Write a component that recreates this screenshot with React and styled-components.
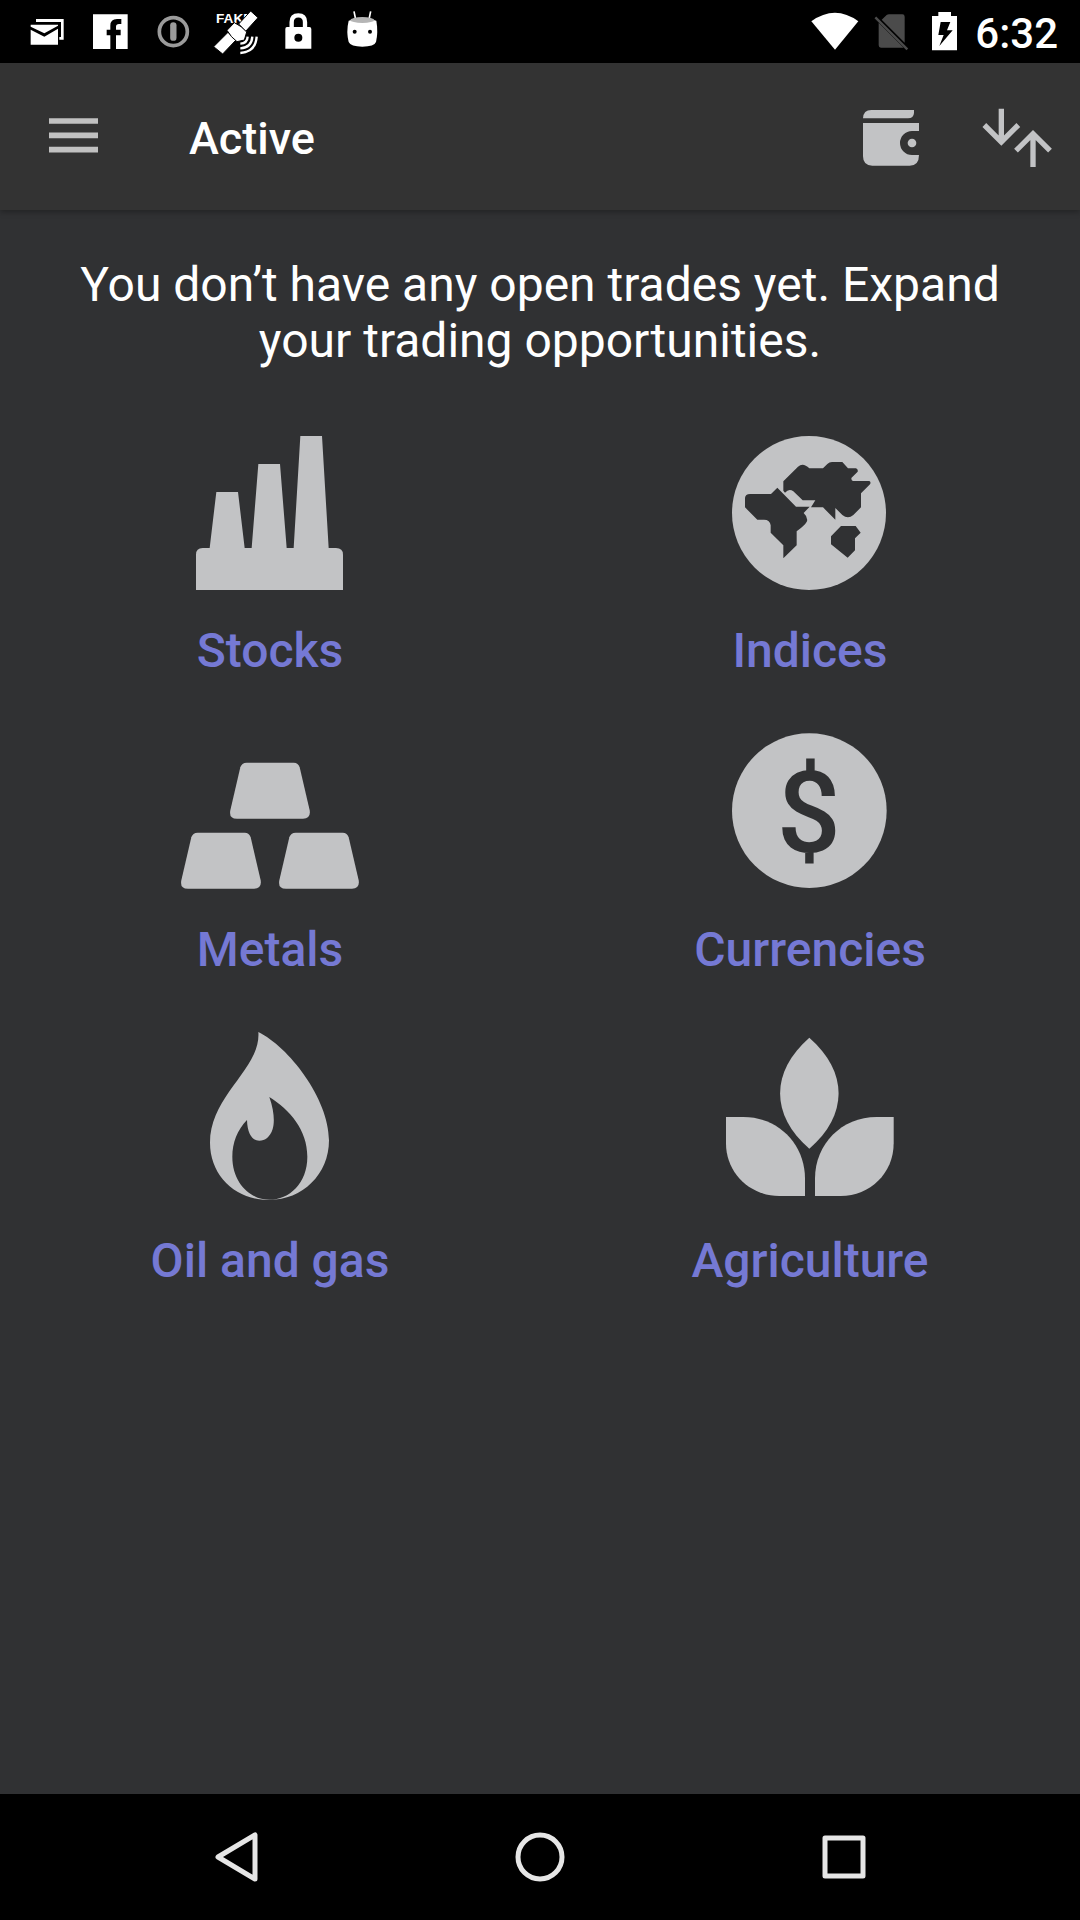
import React from "react";
import styled, { createGlobalStyle } from "styled-components";

const GlobalStyle = createGlobalStyle`
  *, *::before, *::after { box-sizing: border-box; }
  body {
    margin: 0;
    background: #303133;
    color: #ffffff;
    font-family: Roboto, "Liberation Sans", sans-serif;
  }
`;

const Screen = styled.div`
  display: flex;
  flex-direction: column;
  min-height: 100vh;
`;

const StatusBar = styled.div`
  display: flex;
  justify-content: space-between;
  align-items: center;
  height: 63px;
  padding: 0 22px 0 16px;
  background: #000000;
`;

const StatusGroup = styled.div`
  display: flex;
  align-items: center;
`;

const StatusIcon = styled.svg`
  display: block;
  width: ${(p) => p.$width}px;
  height: 63px;
`;

const Clock = styled.time`
  padding-top: 4px;
  font-size: 42px;
  line-height: 48px;
  font-weight: 500;
`;

const AppBar = styled.header`
  display: flex;
  align-items: center;
  height: 147px;
  background: #333333;
  box-shadow: 0 2px 6px rgba(0, 0, 0, 0.3);
`;

const BarButton = styled.button`
  width: ${(p) => p.$width}px;
  height: 147px;
  padding: 0;
  border: 0;
  background: none;
  cursor: pointer;

  svg {
    display: block;
    width: 100%;
    height: 100%;
  }
`;

const Title = styled.h1`
  flex: 1;
  margin: 0;
  padding: 4px 0 0 42px;
  font-size: 45px;
  line-height: 56px;
  font-weight: 500;
`;

const Main = styled.main`
  flex: 1;
  padding: 47px 0 0;
`;

const Message = styled.p`
  margin: 0;
  padding: 0 64px;
  font-size: 48px;
  line-height: 56px;
  text-align: center;
`;

const Categories = styled.div`
  display: grid;
  grid-template-columns: 1fr 1fr;
  row-gap: 54px;
  margin-top: 67px;
`;

const Category = styled.button`
  display: flex;
  flex-direction: column;
  align-items: center;
  justify-content: flex-end;
  gap: 33px;
  padding: 0;
  border: 0;
  background: none;
  color: #7579d4;
  font-family: inherit;
  font-size: 48px;
  line-height: 56px;
  font-weight: 500;
  cursor: pointer;
`;

const CategoryIcon = styled.svg`
  display: block;
  width: ${(p) => p.$width}px;
  height: ${(p) => p.$height}px;
  fill: #c2c3c5;
`;

const NavBar = styled.nav`
  display: flex;
  justify-content: center;
  height: 126px;
  background: #000000;
`;

const NavButton = styled.button`
  display: flex;
  align-items: center;
  justify-content: center;
  width: 304px;
  padding: 0;
  border: 0;
  background: none;
  cursor: pointer;

  svg {
    width: 56px;
    height: 56px;
    fill: none;
    stroke: #e6e6e6;
    stroke-width: 5;
    stroke-linejoin: round;
  }
`;

const StocksIcon = () => (
  <CategoryIcon $width={148} $height={154} viewBox="108 48 444 462" aria-hidden="true">
    <path d="M108 510V404Q108 384 128 384H149L169 216H234L254 384H275L295 132H360L380 384H401L421 48H486L506 384H528Q549 384 549 404V510Z" />
  </CategoryIcon>
);

const IndicesIcon = () => (
  <CategoryIcon $width={156} $height={154} viewBox="66 48 468 462" aria-hidden="true">
    <circle cx="297" cy="279" r="231" />
    <g fill="#303133">
      <path d="M105 234Q106 222 120 222H183L202 203L258 260H299L281 279Q294 291 291 304Q288 314 260 334V376L220 415V376L182 338V316Q180 299 162 299H142L105 262Z" />
      <path d="M220 184L264 140Q279 126 298 145H339L352 132Q358 126 366 126H397L414 145H438Q445 148 443 155L424 174Q424 183 430 183H478Q484 187 480 193L453 220V262L430 285Q414 299 397 285L376 264V299L339 262H303L316 241H278L250 214Q237 204 225 218L220 212Z" />
      <path d="M393 318H437L452 338L435 355V391L413 413L363 373V349Z" />
    </g>
  </CategoryIcon>
);

const MetalsIcon = () => (
  <CategoryIcon $width={178} $height={156} viewBox="123 69 534 468" aria-hidden="true">
    <path d="M320 158H461Q475 158 479 172L509 301Q513 326 489 326H291Q266 326 271 301L301 172Q305 158 320 158Z" />
    <path d="M173 368H314Q328 368 332 382L362 511Q366 536 342 536H144Q119 536 124 511L154 382Q158 368 173 368Z" />
    <path d="M467 368H608Q622 368 626 382L656 511Q660 536 636 536H438Q413 536 418 511L448 382Q452 368 467 368Z" />
  </CategoryIcon>
);

const CoinSign = styled.text`
  fill: #303133;
  font-family: Roboto, sans-serif;
  font-size: 338px;
  font-weight: 500;
  text-anchor: middle;
`;

const CurrenciesIcon = () => (
  <CategoryIcon $width={156} $height={156} viewBox="186 69 468 468" aria-hidden="true">
    <circle cx="418" cy="302" r="232" />
    <CoinSign x="416" y="426">$</CoinSign>
  </CategoryIcon>
);

const OilIcon = () => (
  <CategoryIcon $width={120} $height={168} viewBox="240 66 360 504" aria-hidden="true">
    <path d="M385 66C475 110 597 265 597 391C597 493 517 570 418 570C318 570 240 498 240 398C240 255 394 175 385 66ZM418 261C433 303 434 337 428 357C420 382 405 392 388 392C366 392 352 370 351 330C322 360 307 398 307 440C307 520 362 569 418 569C478 569 532 520 532 440C532 360 480 300 418 261Z" />
  </CategoryIcon>
);

const AgricultureIcon = () => (
  <CategoryIcon $width={168} $height={168} viewBox="168 66 504 504" aria-hidden="true">
    <path d="M418 83C535 185 535 315 418 416C301 315 301 185 418 83Z" />
    <path d="M168 321H220C325 321 405 402 405 506V558H328C240 558 168 490 168 400Z" />
    <path d="M671 321H620C515 321 435 402 435 506V558H512C600 558 671 490 671 400Z" />
  </CategoryIcon>
);

const categories = [
  ["Stocks", StocksIcon],
  ["Indices", IndicesIcon],
  ["Metals", MetalsIcon],
  ["Currencies", CurrenciesIcon],
  ["Oil and gas", OilIcon],
  ["Agriculture", AgricultureIcon],
];

const FakeLabel = styled.text`
  fill: #ffffff;
  font-family: "Liberation Sans", sans-serif;
  font-size: 41px;
  font-weight: 700;
`;

const Notifications = () => (
  <StatusGroup>
    <StatusIcon $width={63} viewBox="48 0 189 189" aria-label="Mail">
      <path d="M108 66V57H191V119H178V111H183V66Z" fill="#fff" />
      <path d="M92 74H174V77L133 100L92 80ZM92 89L133 110L174 86V134H92Z" fill="#fff" />
    </StatusIcon>
    <StatusIcon $width={63} viewBox="237 0 189 189" aria-label="Facebook">
      <path d="M279 43H383V147H348V106H362V89H348V80Q348 72 357 72H364V57H351Q331 57 331 77V89H320V106H331V147H279Z" fill="#fff" />
    </StatusIcon>
    <StatusIcon $width={63} viewBox="426 0 189 189" aria-label="Password manager">
      <circle cx="520" cy="95" r="42" fill="none" stroke="#9b9b9b" strokeWidth="11" />
      <path d="M520 76V113" stroke="#9b9b9b" strokeWidth="19" strokeLinecap="round" />
    </StatusIcon>
    <StatusIcon $width={63} viewBox="615 0 189 189" aria-label="Fake location">
      <FakeLabel x="648" y="69">FAKE</FakeLabel>
      <g stroke="#000" strokeWidth="3">
        <path d="M641 140L684 97L708 120L668 162Z" fill="#fff" />
        <path d="M716 72L752 33L774 53L737 94Z" fill="#fff" />
        <path d="M681 91L703 68Q725 78 740 96L733 120L711 125Q693 112 681 91Z" fill="#fff" />
      </g>
      <path d="M743 110Q742 130 721 131M757 110Q755 143 721 145M770 110Q767 156 721 159" fill="none" stroke="#fff" strokeWidth="7" />
    </StatusIcon>
    <StatusIcon $width={63} viewBox="804 0 189 189" aria-label="Lock">
      <path d="M875 84V66Q875 46 895 46Q915 46 915 66V84" fill="none" stroke="#fff" strokeWidth="13" />
      <path fillRule="evenodd" d="M861 81H928Q934 81 934 87V146H856V87Q856 81 861 81ZM895 101A12 12 0 1 0 895 125A12 12 0 1 0 895 101Z" fill="#fff" />
    </StatusIcon>
    <StatusIcon $width={63} viewBox="993 0 189 189" aria-label="Android">
      <path d="M1062 34L1067 58M1112 34L1107 58" stroke="#fff" strokeWidth="5" />
      <path d="M1046 62Q1087 46 1129 62Q1135 95 1128 126Q1123 140 1087 140Q1052 140 1046 126Q1038 95 1046 62Z" fill="#fff" />
      <ellipse cx="1087" cy="60" rx="36" ry="9" fill="#b5b5b5" />
      <circle cx="1064" cy="95" r="6" />
      <circle cx="1110" cy="95" r="6" />
    </StatusIcon>
  </StatusGroup>
);

const SystemStatus = () => (
  <StatusGroup>
    <StatusIcon $width={56} viewBox="81 0 168 189" aria-label="Wi-Fi">
      <path d="M94 64Q165 13 235 64L165 149Z" fill="#fff" />
    </StatusIcon>
    <StatusIcon $width={56} viewBox="249 0 168 189" aria-label="No SIM card">
      <path d="M305 59L320 45Q323 43 327 43H367Q374 43 374 50V128ZM296 68L371 143H303Q296 143 296 136Z" fill="#4b4b4b" />
      <path d="M286 52L382 148" stroke="#4b4b4b" strokeWidth="7" />
    </StatusIcon>
    <StatusIcon $width={56} viewBox="417 0 168 189" aria-label="Battery charging">
      <path fillRule="evenodd" d="M475 36H513V48H531V151H456V48H475ZM482 66L475 105H491L478 138L518 91H501L511 66Z" fill="#fff" />
    </StatusIcon>
    <Clock>6:32</Clock>
  </StatusGroup>
);

export default function App() {
  return (
    <>
      <GlobalStyle />
      <Screen>
        <StatusBar>
          <Notifications />
          <SystemStatus />
        </StatusBar>
        <AppBar>
          <BarButton $width={147} aria-label="Menu">
            <svg viewBox="0 9 441 441">
              <path d="M147 183H294M147 226H294M147 269H294" stroke="#c1c1c1" strokeWidth="17" />
            </svg>
          </BarButton>
          <Title>Active</Title>
          <BarButton $width={126} aria-label="Wallet">
            <svg viewBox="24 -51 378 441" fill="#c2c3c5">
              <path d="M129 115Q130 90 154 90H282V99Q281 115 264 115Z" />
              <path d="M129 129H297V153H276A36 36 0 0 0 276 225H297Q297 257 269 257H157Q129 257 129 229Z" />
              <circle cx="276" cy="189" r="13" />
            </svg>
          </BarButton>
          <BarButton $width={126} aria-label="Sort">
            <svg viewBox="402 -51 378 441" fill="none" stroke="#c2c3c5" strokeWidth="16">
              <path d="M544 86V185M493 135L544 186L595 135" />
              <path d="M639 261V162M588 212L639 161L690 212" />
            </svg>
          </BarButton>
        </AppBar>
        <Main>
          <Message>You don’t have any open trades yet. Expand your trading opportunities.</Message>
          <Categories>
            {categories.map(([name, Icon]) => (
              <Category key={name}>
                <Icon />
                <span>{name}</span>
              </Category>
            ))}
          </Categories>
        </Main>
        <NavBar>
          <NavButton aria-label="Back">
            <svg viewBox="0 0 56 56">
              <path d="M47 6V50L10 28Z" />
            </svg>
          </NavButton>
          <NavButton aria-label="Home">
            <svg viewBox="0 0 56 56">
              <circle cx="28" cy="28" r="22" />
            </svg>
          </NavButton>
          <NavButton aria-label="Recent apps">
            <svg viewBox="0 0 56 56">
              <rect x="9" y="9" width="38" height="38" />
            </svg>
          </NavButton>
        </NavBar>
      </Screen>
    </>
  );
}
